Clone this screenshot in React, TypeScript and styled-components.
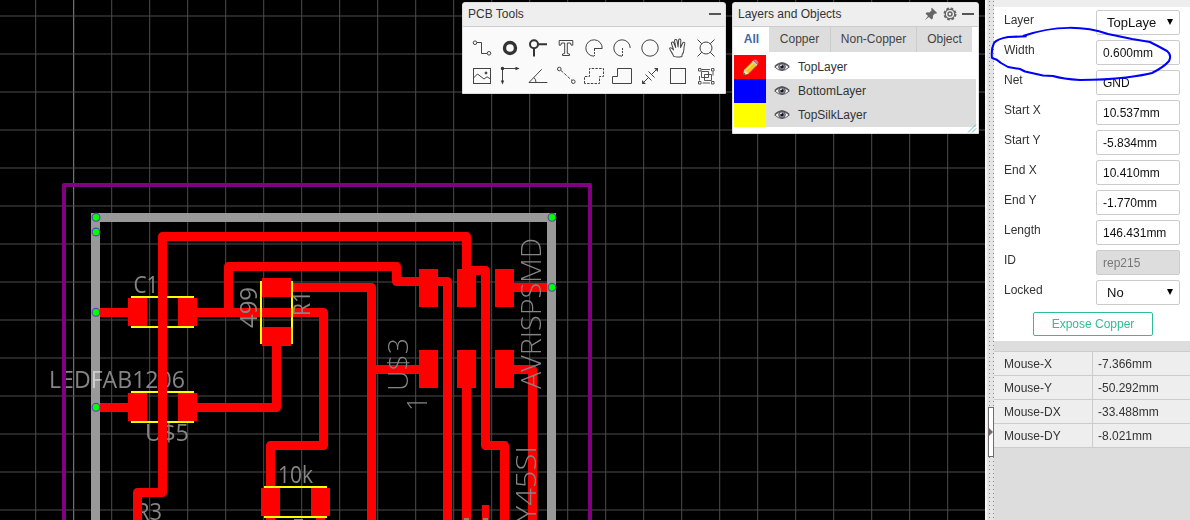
import React from 'react';
import styled, { createGlobalStyle } from 'styled-components';

const GlobalStyle = createGlobalStyle`
  * { box-sizing: border-box; }
  body { margin: 0; background: #000; font: 12px "Liberation Sans", Arial, sans-serif; color: #333; overflow: hidden; }
`;

const Editor = styled.main`
  position: relative;
  display: flex;
  width: 1190px;
  height: 520px;
`;

const Workspace = styled.section`
  position: relative;
  width: 985px;
  height: 520px;
  background: #000;
  overflow: hidden;
`;

const BoardSvg = styled.svg`
  display: block;
`;

const FloatingPanel = styled.section<{ $left: number; $width: number; $height: number; $bg: string }>`
  position: absolute;
  top: 2px;
  left: ${(p) => p.$left}px;
  width: ${(p) => p.$width}px;
  height: ${(p) => p.$height}px;
  background: ${(p) => p.$bg};
  border: 1px solid #ddd;
  border-radius: 3px 3px 0 0;
`;

const PanelHeader = styled.header`
  display: flex;
  align-items: center;
  justify-content: space-between;
  height: 24px;
  padding: 0 4px 2px 5px;
  background: #eee;
  border-bottom: 1px solid #ccc;
  border-radius: 3px 3px 0 0;
`;

const HeaderActions = styled.div`
  display: flex;
  align-items: center;
  gap: 5px;
  padding-top: 1px;
`;

const Minimise = styled.span`
  width: 12px;
  height: 2px;
  background: #555;
`;

const ToolGrid = styled.div`
  display: grid;
  grid-template-columns: repeat(9, 28px);
  grid-auto-rows: 28px;
  padding: 7px 0 0 5px;
`;

const ToolIcon = styled.svg`
  width: 28px;
  height: 28px;
  fill: none;
  stroke: #444;
  stroke-width: 1;
`;

const Tabs = styled.div`
  display: flex;
  height: 25px;
  padding-left: 1px;
`;

const Tab = styled.div<{ $width: number; $active?: boolean }>`
  width: ${(p) => p.$width}px;
  line-height: 24px;
  text-align: center;
  color: ${(p) => (p.$active ? '#3d68a8' : '#444')};
  font-weight: ${(p) => (p.$active ? 700 : 400)};
  background: ${(p) => (p.$active ? '#fff' : '#ddd')};
  border-right: ${(p) => (p.$active ? 0 : 1)}px solid #ccc;
  &:last-child { border-right: 0; }
`;

const LayerList = styled.div`
  padding: 3px 2px 0 1px;
`;

const LayerRow = styled.div<{ $selected?: boolean }>`
  display: flex;
  align-items: center;
  height: 24px;
  background: ${(p) => (p.$selected ? '#fff' : '#ddd')};
`;

const Swatch = styled.span<{ $color: string }>`
  display: flex;
  align-items: center;
  justify-content: center;
  width: 32px;
  height: 24px;
  margin-right: 8px;
  background: ${(p) => p.$color};
`;

const LayerName = styled.span`
  margin-left: 8px;
`;

const ResizeGrip = styled.svg`
  position: absolute;
  right: 1px;
  bottom: 0;
`;

const Splitter = styled.div`
  display: flex;
  width: 9px;
  height: 520px;
  padding-top: 407px;
  padding-left: 3px;
  background-color: #e4e4e4;
  background-image: linear-gradient(to right, #f4f4f4 2px, transparent 2px),
    radial-gradient(circle at 1.5px 1.5px, #888 0.7px, transparent 0.9px);
  background-size: 9px 4px, 4px 4px;
  background-position: 0 0, 3px 0;
`;

const CollapseHandle = styled.div`
  width: 6px;
  height: 50px;
  background: #fff;
  border: 1px solid #756a6a;
`;

const Sidebar = styled.aside`
  width: 196px;
  height: 520px;
  background: #ddd;
`;

const Properties = styled.div`
  height: 341px;
  padding-top: 10px;
  background: linear-gradient(#eee 7px, #fff 7px);
`;

const PropertyRow = styled.div`
  display: flex;
  height: 30px;
  padding-left: 10px;
`;

const PropertyLabel = styled.label`
  width: 92px;
  padding-top: 3px;
  line-height: 14px;
`;

const Field = styled.div<{ $disabled?: boolean; $select?: boolean }>`
  display: flex;
  align-items: center;
  justify-content: space-between;
  width: 84px;
  height: 25px;
  padding: ${(p) => (p.$select ? '0 5px 0 10px' : '1px 6px 0')};
  font-size: ${(p) => (p.$select ? 13 : 12)}px;
  color: ${(p) => (p.$disabled ? '#777' : '#111')};
  background: ${(p) => (p.$disabled ? '#ddd' : '#fff')};
  border: 1px solid #ccc;
  border-radius: 2px;
`;

const ExposeButton = styled.button`
  display: block;
  width: 120px;
  height: 24px;
  margin: 2px 0 0 39px;
  padding: 0;
  font: inherit;
  color: #2ebd98;
  background: #fff;
  border: 1px solid #2ebd98;
  border-radius: 2px;
`;

const MouseTable = styled.div`
  margin-top: 10px;
  border-top: 1px solid #ccc;
`;

const MouseRow = styled.div`
  display: grid;
  grid-template-columns: 99px 1fr;
  height: 24px;
  line-height: 24px;
  background: #eee;
  border-bottom: 1px solid #ccc;
`;

const MouseName = styled.span`
  height: 23px;
  padding-left: 10px;
  border-right: 1px solid #ccc;
`;

const MouseValue = styled.span`
  height: 23px;
  padding-left: 5px;
`;

const Annotation = styled.svg`
  position: absolute;
  top: 20px;
  left: 985px;
  pointer-events: none;
`;

const verticals = Array.from({ length: 26 }, (_, i) => 35.7 + i * 38);
const horizontals = Array.from({ length: 14 }, (_, i) => 16 + i * 38);

const traces = [
  'M96 312.5H138',
  'M96 407.5H138',
  'M137.5 530V492.5H162.5V236.5H466.5V270.5H485.5V445.5H504.5V530',
  'M188 312.5H323.5V445.5H270.5V500',
  'M228.5 312.5V266.5H396.5V281.5H447.5V530',
  'M276.5 287.5H371.5V530',
  'M276.5 337V407.5H188',
  'M371.5 369.5H428',
  'M466.5 369V530',
  'M504 369.5H532.5V530',
  'M504 287.5H551',
  'M270.5 505V530M320.5 505V530',
];

const pads = [
  [128, 298, 19, 28], [178, 298, 19, 28],
  [128, 393, 19, 28], [178, 393, 19, 28],
  [262, 278, 29, 19], [262, 327, 29, 19],
  [261, 488, 19, 28], [311, 488, 19, 28],
  [419, 269, 19, 38], [457, 269, 19, 38], [495, 269, 19, 38],
  [419, 350, 19, 38], [457, 350, 19, 38], [495, 350, 19, 38],
];

const anchors = [[96, 217.3], [96, 232], [96, 312.3], [96, 407.3], [552, 217.3], [552, 287.3]];

interface SilkProps {
  x: number;
  y: number;
  length: number;
  children: string;
  size?: number;
  vertical?: boolean;
  thin?: boolean;
}

function Silk({ x, y, length, children, size = 23, vertical, thin }: SilkProps) {
  return (
    <text
      x={0}
      y={0}
      transform={`translate(${x} ${y})${vertical ? ' rotate(-90)' : ''}`}
      fontFamily="'Open Sans', sans-serif"
      fontWeight={thin ? 300 : 400}
      fontSize={size}
      textLength={length}
      lengthAdjust="spacingAndGlyphs"
      fill="#858585"
    >
      {children}
    </text>
  );
}

function Board() {
  return (
    <BoardSvg width="985" height="520" viewBox="0 0 985 520">
      <g stroke="#4c4c4c">
        {verticals.map((x, i) => <path key={x} d={`M${x} 0V520`} stroke={i === 1 ? '#8a8a8a' : undefined} />)}
        {horizontals.map((y) => <path key={y} d={`M0 ${y}H985`} />)}
      </g>
      <Silk x={133.5} y={292.5} length={25}>C1</Silk>
      <Silk x={49} y={388} length={136}>LEDFAB1206</Silk>
      <Silk x={145} y={441} length={44}>U$5</Silk>
      <Silk x={136} y={520} length={26}>R3</Silk>
      <Silk x={278} y={482.5} length={35}>10k</Silk>
      <path d="M64 530V185H590V530" fill="none" stroke="#800080" strokeWidth="4" strokeLinejoin="round" />
      <g fill="none" stroke="#f00" strokeWidth="9" strokeLinejoin="round">
        {traces.map((d) => <path key={d} d={d} />)}
      </g>
      <g fill="#f00" shapeRendering="crispEdges">
        {pads.map(([x, y, w, h]) => <rect key={`${x}-${y}`} x={x} y={y} width={w} height={h} />)}
        <rect x="482" y="505" width="7" height="15" />
      </g>
      <g fill="#858585">
        <rect x="464" y="518" width="5" height="2" />
        <rect x="483" y="518" width="5" height="2" />
        <rect x="294" y="519" width="9" height="1" />
      </g>
      <path
        d="M131 297H158M167 297H194M131 327H158M167 327H194M131 392H158M167 392H194M131 422H158M167 422H194M264 487H327M264 517H327M261 281V344M292 281V344"
        stroke="#ff0"
        strokeWidth="2"
      />
      <path d="M95.5 530V217.5H551.5V530" fill="none" stroke="#999" strokeWidth="9" />
      <clipPath id="rail"><rect x="91" y="365" width="9" height="30" /></clipPath>
      <g clipPath="url(#rail)" style={{ mixBlendMode: 'screen' }}>
        <Silk x={49} y={388} length={136}>LEDFAB1206</Silk>
      </g>
      <Silk x={257} y={328} length={41} vertical>499</Silk>
      <Silk x={310} y={316} length={25} vertical>R1</Silk>
      <Silk x={408} y={391} length={53} size={27} vertical thin>U$3</Silk>
      <Silk x={427} y={411} length={15} size={27} vertical thin>1</Silk>
      <Silk x={541} y={389} length={151} size={27} vertical thin>AVRISPSMD</Silk>
      <Silk x={536} y={522} length={76} size={28} vertical thin>Y45SI</Silk>
      {anchors.map(([x, y]) => (
        <circle key={`${x}-${y}`} cx={x} cy={y} r="3.9" fill="#0f0" stroke="#5b3fc0" strokeWidth="1.1" />
      ))}
    </BoardSvg>
  );
}

const toolDrawings: React.ReactNode[] = [
  <><circle cx="7" cy="8.7" r="1.8" /><circle cx="21" cy="19.3" r="1.8" /><path d="M9 8.5H13.5V19.5H19" /></>,
  <circle cx="14" cy="14" r="5.5" strokeWidth="3.4" stroke="#333" />,
  <g stroke="#333"><circle cx="10" cy="10.3" r="4" strokeWidth="2" /><path d="M14 10.3H23M10 14.3V22.5" strokeWidth="2" /></g>,
  <path d="M7.2 6.5H20.8V11.2H19.2L18.5 9H15.3V19.5L17.5 20V21.5H10.5V20L12.7 19.5V9H9.5L8.8 11.2H7.2Z" />,
  <><path d="M14 22.2A8.2 8.2 0 1 1 22.2 14.5H14" /><path d="M14.5 15V22" strokeDasharray="2 1" /></>,
  <><path d="M14 22.2A8.2 8.2 0 1 1 22.2 14" /><path d="M14.5 14V22" strokeDasharray="2 1" /></>,
  <circle cx="14" cy="14" r="8.2" />,
  <path d="M10.3 22.5C9.5 19.5 6 17.5 5.7 15.2C6.4 13.7 8.6 15.2 9.8 16.4L7 10.2C6.6 8.6 8.6 8 9.3 9.4L11.7 13.7L9.8 7.2C9.6 5.5 11.6 5.1 12.2 6.6L14 13L13.8 6C14 4.5 15.8 4.5 16 6L16.5 13.3L18.3 8.3C19 7 20.6 7.7 20.3 9.2C19 13.5 21.5 17 18.8 20V22Q14 24 10.3 22.5Z" strokeLinejoin="round" transform="rotate(6 14 14)" />,
  <><circle cx="14" cy="14" r="6" /><path d="M5.5 5.5L9.8 9.8M22.5 5.5L18.2 9.8M5.5 22.5L9.8 18.2M22.5 22.5L18.2 18.2" /></>,
  <><rect x="5.5" y="6.5" width="17" height="15" /><path d="M5.5 16L9.5 12L16 17L19 14.8L22.5 17" /><circle cx="18" cy="11" r="1" fill="#333" /></>,
  <><path d="M23 6.5H6.5V21" /><path d="M19.5 4.8L23.5 6.5L19.5 8.2ZM4.8 18.5L6.5 22.5L8.2 18.5Z" fill="#333" stroke="none" /><circle cx="6.5" cy="6.5" r="1.7" fill="#333" stroke="none" /></>,
  <path d="M17.7 7.3L5 20.5H23.3M10 15.5Q12 17.5 12 20.5" />,
  <><circle cx="7.3" cy="7" r="1.8" /><circle cx="21.3" cy="19.7" r="1.8" /><path d="M9 8.5L20 18.5" strokeDasharray="3 1.5" /></>,
  <path d="M4.5 21.5V14.5H9.5V6.5H23.5V14.5H19.5V21.5Z" strokeDasharray="2.5 1.2" />,
  <path d="M4.5 21.5V14.5H9.5V6.5H23.5V21.5Z" />,
  <><path d="M7 21L12.5 15.5M15.5 12.5L21 7M9.5 12.5L15.5 18.5M12.5 9.5L18.5 15.5" /><path d="M6 22V18L10 22ZM22 6V10L18 6Z" fill="#444" stroke="none" /></>,
  <rect x="6.5" y="6.5" width="15" height="15" />,
  <>
    <path d="M6.5 6.5h2.5v2.5h-2.5zM19.5 6.5h2.5v2.5h-2.5zM6.5 19.5h2.5v2.5h-2.5zM19.5 19.5h2.5v2.5h-2.5z" strokeWidth="0.9" />
    <path d="M9.5 9.5H16.5V15.5H9.5ZM12.5 12.5H19.5V18.5H12.5ZM9.5 7.5H18M21 9.5V13.5M7.5 14V18.5M10.5 21H18" strokeWidth="0.9" strokeDasharray="none" />
  </>,
];

function ToolsPanel() {
  return (
    <FloatingPanel $left={462} $width={264} $height={92} $bg="#fafafa">
      <PanelHeader>PCB Tools<Minimise /></PanelHeader>
      <ToolGrid>
        {toolDrawings.map((drawing, i) => (
          <ToolIcon key={i} viewBox="0 0 28 28">{drawing}</ToolIcon>
        ))}
      </ToolGrid>
    </FloatingPanel>
  );
}

const PinIcon = () => (
  <svg width="14" height="14" viewBox="0 0 14 14" fill="#666">
    <path d="M7.8 .8L13.2 5.9L11.6 6.8L10.9 6.5L8.9 8.7L9 11.2L7.5 12.4L4.9 9.9L.8 13.2L4 9.1L1.5 6.7L2.9 5.3L5.4 5.4L7.7 3.2L7.1 2Z" />
  </svg>
);

const GearIcon = () => (
  <svg width="14" height="14" viewBox="0 0 14 14" fill="none" stroke="#666">
    <circle cx="7" cy="7" r="5.5" strokeWidth="2" strokeDasharray="2.6 1.72" />
    <circle cx="7" cy="7" r="4.7" strokeWidth="1.3" />
    <circle cx="7" cy="7" r="2" strokeWidth="1.4" />
  </svg>
);

const EyeIcon = () => (
  <svg width="16" height="12" viewBox="0 0 16 12">
    <path d="M.7 6Q8-2 15.3 6Q8 13 .7 6Z" fill="#fff" stroke="#555" />
    <path d="M1 5.5Q8-1.5 15 5.5" fill="none" stroke="#555" strokeWidth="1.5" />
    <circle cx="8" cy="5.7" r="3.4" fill="#888e9c" stroke="#444" strokeWidth=".8" />
    <circle cx="8" cy="5.7" r="1.6" fill="#111" />
    <circle cx="7" cy="4.5" r=".8" fill="#fff" />
  </svg>
);

const PencilIcon = () => (
  <svg width="17" height="17" viewBox="0 0 16 16">
    <path d="M1 15L2.2 9.8L10 2L14 6L6.2 13.8Z" fill="#f8c022" stroke="#9c6818" strokeWidth=".6" />
    <path d="M3.6 10.8L11 3.4" stroke="#ffe970" />
    <path d="M1 15L2.2 9.8L6.2 13.8Z" fill="#f6dfb9" />
    <path d="M1 15L1.6 12.7L3.3 14.4Z" fill="#333" />
    <path d="M9.3 2.7L10.8 1.2L14.8 5.2L13.3 6.7Z" fill="#c8cbd1" />
    <path d="M10.8 1.2Q12.4-.3 14.4 1.3Q16.2 3.3 14.8 5.2Z" fill="#ed7779" stroke="#9b4545" strokeWidth=".5" />
  </svg>
);

const layers = [
  { name: 'TopLayer', color: '#f00', selected: true },
  { name: 'BottomLayer', color: '#00f' },
  { name: 'TopSilkLayer', color: '#ff0' },
];

function LayersPanel() {
  return (
    <FloatingPanel $left={732} $width={247} $height={132} $bg="#fff">
      <PanelHeader>
        Layers and Objects
        <HeaderActions><PinIcon /><GearIcon /><Minimise /></HeaderActions>
      </PanelHeader>
      <Tabs>
        <Tab $width={35} $active>All</Tab>
        <Tab $width={62}>Copper</Tab>
        <Tab $width={86}>Non-Copper</Tab>
        <Tab $width={55}>Object</Tab>
      </Tabs>
      <LayerList>
        {layers.map((layer) => (
          <LayerRow key={layer.name} $selected={layer.selected}>
            <Swatch $color={layer.color}>{layer.selected && <PencilIcon />}</Swatch>
            <EyeIcon />
            <LayerName>{layer.name}</LayerName>
          </LayerRow>
        ))}
      </LayerList>
      <ResizeGrip width="10" height="9" viewBox="0 0 10 9">
        <path d="M1 8.5L9 .5M5 8.5L9 4.5" stroke="#64b8b4" />
      </ResizeGrip>
    </FloatingPanel>
  );
}

const properties = [
  { label: 'Layer', value: 'TopLaye', select: true },
  { label: 'Width', value: '0.600mm' },
  { label: 'Net', value: 'GND' },
  { label: 'Start X', value: '10.537mm' },
  { label: 'Start Y', value: '-5.834mm' },
  { label: 'End X', value: '10.410mm' },
  { label: 'End Y', value: '-1.770mm' },
  { label: 'Length', value: '146.431mm' },
  { label: 'ID', value: 'rep215', disabled: true },
  { label: 'Locked', value: 'No', select: true },
];

const mouse = [
  ['Mouse-X', '-7.366mm'],
  ['Mouse-Y', '-50.292mm'],
  ['Mouse-DX', '-33.488mm'],
  ['Mouse-DY', '-8.021mm'],
];

export default function App() {
  return (
    <>
      <GlobalStyle />
      <Editor>
        <Workspace>
          <Board />
          <ToolsPanel />
          <LayersPanel />
        </Workspace>
        <Splitter>
          <CollapseHandle>
            <svg width="4" height="48" viewBox="0 0 4 48" display="block">
              <path d="M0 20L4 24L0 28Z" fill="#756a6a" />
            </svg>
          </CollapseHandle>
        </Splitter>
        <Sidebar>
          <Properties>
            {properties.map((p) => (
              <PropertyRow key={p.label}>
                <PropertyLabel>{p.label}</PropertyLabel>
                <Field $select={p.select} $disabled={p.disabled}>
                  {p.value}
                  {p.select && <svg width="8" height="7" viewBox="0 0 8 7"><path d="M1 0H7L4 6Z" fill="#000" /></svg>}
                </Field>
              </PropertyRow>
            ))}
            <ExposeButton>Expose Copper</ExposeButton>
          </Properties>
          <MouseTable>
            {mouse.map(([name, value]) => (
              <MouseRow key={name}>
                <MouseName>{name}</MouseName>
                <MouseValue>{value}</MouseValue>
              </MouseRow>
            ))}
          </MouseTable>
        </Sidebar>
        <Annotation width="205" height="70" viewBox="985 20 205 70">
          <path
            d="M1026.7 36.3L1008 37Q997 39 994 43Q991 49 992 58Q997 59 1001 63L1008 67L1020 69L1025 71.5L1043 75.5L1053 76Q1063 79 1080 80Q1105 80 1126 77.5Q1145 75 1152 73Q1164 67 1169 61Q1172 55 1167 51Q1156 45 1150 42L1132 39L1108 34C1085 26 1055 25 1023 36"
            fill="none"
            stroke="#00f"
            strokeWidth="2"
            strokeLinejoin="round"
          />
        </Annotation>
      </Editor>
    </>
  );
}
